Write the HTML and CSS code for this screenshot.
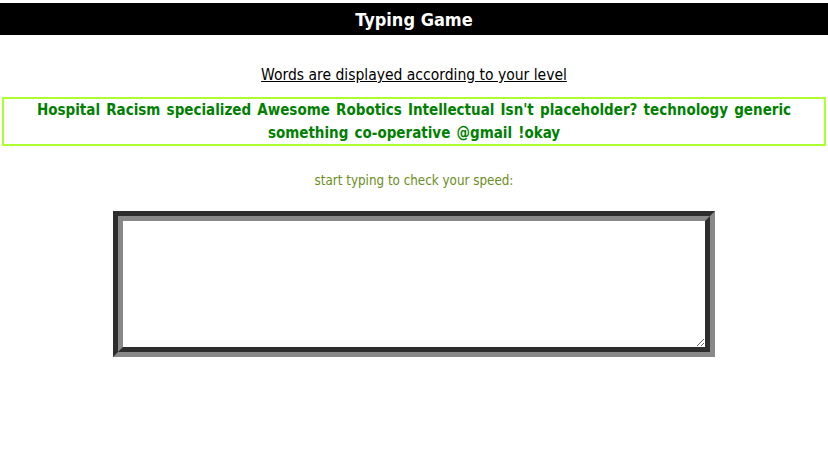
FILE: index.html
```html
<!DOCTYPE html>
<html>
<head>
<meta charset="utf-8">
<title>Typing Game</title>
<link rel="stylesheet" href="styles.css">
</head>
<body>
<header class="topbar"><h1 class="title">Typing Game</h1></header>
<main class="game">
  <p class="lead">Words are displayed according to your level</p>
  <div class="words">Hospital Racism specialized Awesome Robotics Intellectual Isn't placeholder? technology generic something co-operative @gmail !okay</div>
  <p class="hint">start typing to check your speed:</p>
  <div class="frame"><textarea class="input"></textarea></div>
</main>
</body>
</html>
```
FILE: styles.css
```css
html, body { margin: 0; padding: 0; background: #fff; }
body { font-family: "DejaVu Sans Condensed", "DejaVu Sans", sans-serif; padding-top: 3px; }
.topbar { background: #000; height: 32px; display: flex; align-items: center; justify-content: center; }
.title { margin: 0; color: #fff; font-size: 18px; font-weight: bold; }
.game { display: flex; flex-direction: column; align-items: center; }
.lead { margin: 30px 0 0; font-size: 15.5px; text-decoration: underline; color: #000; line-height: 20px; }
.words { box-sizing: border-box; width: 824px; margin-top: 12px; border: 2px solid #adff2f; color: #008000; font-weight: bold; font-size: 15px; line-height: 23px; height: 49px; text-align: center; word-spacing: 1.5px; }
.hint { margin: 25px 0 0; color: #6b8e23; font-size: 13.3px; line-height: 20px; }
.frame { margin-top: 20px; border: 5px solid; border-color: #2d2d2d #888 #888 #2d2d2d; display: flex; }
.input { width: 582px; height: 126px; margin: 0; padding: 0; border: 5px solid; border-color: #888 #2d2d2d #2d2d2d #888; box-sizing: content-box; outline: none; }
```
